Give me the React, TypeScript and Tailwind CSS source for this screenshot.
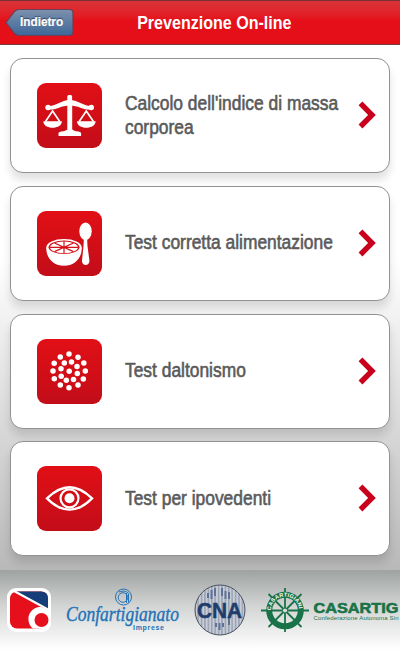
import type { ReactNode } from "react";

interface TestItem {
  label: string;
  icon: ReactNode;
}

const ScalesIcon = () => (
  <svg viewBox="0 0 65 65" className="size-full" fill="#fff">
    <rect x="30.3" y="12" width="4.8" height="8" rx="1.5" />
    <path d="M12 23c8 0 12-6 20.700-6S46 23 53.500 23v3.800c-8 0-12-4.300-20.800-4.300S20 26.800 12 26.800z" />
    <circle cx="11" cy="24.500" r="2.700" />
    <circle cx="54.300" cy="24.500" r="2.700" />
    <path d="M30.300 21h4.900v25.500h-4.900z" />
    <path d="M21.500 53v-2.500c0-1.500 1.500-1.700 5-2.200 3-.5 3-2.300 6.300-2.300s3.300 1.800 6.300 2.300c3.500.5 5 .7 5 2.200V53z" />
    <path d="M6.300 38.300h18.600c0 8.700-18.600 8.700-18.600 0zM40 38.300h18.600c0 8.700-18.600 8.700-18.600 0z" />
    <path
      d="M8.500 38.500 15.600 28l7.100 10.500M42.200 38.500 49.300 28l7.100 10.500"
      fill="none"
      stroke="#fff"
      strokeWidth="1.700"
    />
  </svg>
);

const FoodIcon = () => (
  <svg viewBox="0 0 65 65" className="size-full" fill="#fff">
    <path d="M9.300 37c0 10.500 7 17.700 17.700 17.700S44.700 47.500 44.700 37z" />
    <ellipse cx="27" cy="36.300" rx="17.700" ry="8.300" />
    <ellipse cx="27" cy="36.300" rx="15.500" ry="6.800" fill="#d41018" />
    <ellipse cx="27" cy="36.300" rx="14" ry="5.900" />
    <path
      d="M13 36.300h28M27 30v12.500M17.500 32l19 8.600M36.500 32l-19 8.600"
      stroke="#d41018"
      strokeWidth="1.200"
    />
    <ellipse cx="48.500" cy="20.300" rx="6.200" ry="8.800" />
    <path d="M46.900 27h3.200l.4 8 1.900 14.500c.4 6-7.800 6-7.400 0l1.500-14.500z" />
  </svg>
);

const dots = [
  [32, 15], [23.3, 17.900], [41, 18.200], [17.200, 24.200], [46.800, 24],
  [27.300, 24], [34.500, 22.900], [40, 27.500], [24, 29.800], [16, 32],
  [32.200, 32.300], [48.300, 32], [40.300, 34.500], [24.200, 37.200], [17.300, 39.800],
  [29.300, 41.200], [36.500, 40.500], [46.300, 39.900], [23.300, 46], [41, 45.900],
  [32, 48.800],
];

const DotsIcon = () => (
  <svg viewBox="0 0 65 65" className="size-full" fill="#fff">
    {dots.map(([x, y]) => (
      <circle key={`${x}-${y}`} cx={x} cy={y} r="2.750" />
    ))}
  </svg>
);

const EyeIcon = () => (
  <svg viewBox="0 0 65 65" className="size-full" fill="none" stroke="#fff">
    <path
      d="M10 32.300C17 25.500 24 21.200 32.500 21.200s15.500 4.300 22.500 11.100C48 39.500 41 43.600 32.500 43.600S17 39.500 10 32.300z"
      strokeWidth="2.400"
    />
    <circle cx="32.500" cy="32.300" r="9" strokeWidth="2.200" />
    <circle cx="32.500" cy="32.300" r="5" fill="#fff" stroke="none" />
  </svg>
);

const items: TestItem[] = [
  { label: "Calcolo dell'indice di massa corporea", icon: <ScalesIcon /> },
  { label: "Test corretta alimentazione", icon: <FoodIcon /> },
  { label: "Test daltonismo", icon: <DotsIcon /> },
  { label: "Test per ipovedenti", icon: <EyeIcon /> },
];

function Header() {
  return (
    <header className="relative flex h-[45px] shrink-0 items-center justify-center border-t border-b border-t-[#7d3034] border-b-[#7a3a3e] bg-linear-to-b from-[#d83339] via-[#e50f1a] via-45% to-[#e50f18]">
      <button className="absolute top-[7px] left-[5px] h-[29px] w-[69px]">
        <svg viewBox="0 0 69 29" className="absolute inset-0 size-full">
          <defs>
            <linearGradient id="back" x1="0" y1="0" x2="0" y2="1">
              <stop offset="0" stopColor="#7d91ad" />
              <stop offset="1" stopColor="#3d6798" />
            </linearGradient>
          </defs>
          <path
            d="M1 14.500 9.500 3.500Q11.500 1.500 14 1.500H64.500Q68 1.500 68 5V24Q68 27.500 64.500 27.500H14Q11.500 27.500 9.500 25.500Z"
            fill="url(#back)"
            stroke="#6b3f56"
            strokeWidth="1.200"
          />
        </svg>
        <span className="absolute top-[6px] left-[15px] origin-left scale-x-[0.980] font-['Liberation_Sans'] text-[12px] leading-[17px] font-bold text-white [-webkit-text-stroke:0.2px_#fff] [text-shadow:0_-1px_1px_#223d61]">
          Indietro
        </span>
      </button>
      <h1 className="ml-[28px] scale-x-[0.845] whitespace-nowrap font-['Liberation_Sans'] text-[19px] leading-6 font-bold text-white">
        Prevenzione On-line
      </h1>
    </header>
  );
}

function Card({ label, icon }: TestItem) {
  return (
    <li className="flex h-[115px] items-center rounded-[13px] border border-[#929292] bg-white pr-[13px] pl-[26px] shadow-[0_7px_8px_rgba(0,0,0,0.12)]">
      <div className="size-[65px] shrink-0 overflow-hidden rounded-[9px] bg-linear-to-b from-[#e20f15] to-[#c20d19]">
        {icon}
      </div>
      <div className="ml-[23px] w-[230px] shrink-0 pb-[2px]">
        <p className="w-[250px] origin-left scale-x-[0.892] font-['Liberation_Sans'] text-[19.500px] leading-6 text-[#5a5a5a] [-webkit-text-stroke:0.6px_#5a5a5a]">
          {label}
        </p>
      </div>
      <svg viewBox="0 0 18 28" className="mb-px ml-auto h-[28px] w-[18px]">
        <path
          d="M2.500 2.300 14 14 2.500 25.500"
          fill="none"
          stroke="#c8001c"
          strokeWidth="5.400"
        />
      </svg>
    </li>
  );
}

const FirstLogo = () => (
  <svg viewBox="0 0 44 44" className="size-11 shrink-0">
    <rect width="44" height="44" rx="9" fill="#fff" />
    <rect x="3" y="3.500" width="38" height="37" rx="7" fill="#e60f1c" />
    <path d="M8 3.500H34Q41 3.500 41 10.500V21.500Z" fill="#153e79" />
    <path d="M7 3 41 21.500" stroke="#fff" strokeWidth="2" />
    <path d="M41 21.500A11.500 11.500 0 0 0 26 40.500H28L41 41Z" fill="#fff" />
    <circle cx="34.500" cy="32" r="7" fill="#e60f1c" />
  </svg>
);

const ConfartigianatoLogo = () => (
  <svg
    viewBox="0 0 116 44"
    className="ml-[14px] h-11 w-[116px] shrink-0"
    fill="#2472b7"
  >
    <circle cx="58.500" cy="9" r="8" fill="none" stroke="#2472b7" />
    <circle cx="58" cy="9.500" r="4.800" fill="none" stroke="#2472b7" />
    <path d="M61.500 5v10M54 4q6-2.500 9.500 1.500v9" fill="none" stroke="#2472b7" />
    <text
      x="1"
      y="33"
      textLength="113"
      lengthAdjust="spacingAndGlyphs"
      stroke="#2472b7"
      strokeWidth="0.400"
      className="font-['Liberation_Serif'] text-[21px] italic"
    >
      Confartigianato
    </text>
    <text
      x="68"
      y="42"
      textLength="31"
      className="font-['Liberation_Sans'] text-[7px] font-bold"
    >
      Imprese
    </text>
  </svg>
);

const CnaLogo = () => (
  <svg viewBox="0 0 52 52" className="ml-[13px] size-[52px] shrink-0">
    <defs>
      <pattern id="lines" width="3.400" height="52" patternUnits="userSpaceOnUse">
        <rect width="3.400" height="52" fill="#c8ccd4" />
        <rect width="1.500" height="52" fill="#98a2b5" />
      </pattern>
    </defs>
    <circle cx="26" cy="26" r="25" fill="url(#lines)" stroke="#4b5261" />
    <path
      d="M14 9v5M17.500 6v9M21 4v8M28 4v8M31.500 7v8M35 8v7M22 39v4M25.500 39v7M29 39v4M35 33v8"
      stroke="#5e7297"
      strokeWidth="2"
    />
    <text
      x="3"
      y="34"
      textLength="45"
      lengthAdjust="spacingAndGlyphs"
      fill="#203c6b"
      stroke="#203c6b"
      strokeWidth="0.500"
      className="font-['Liberation_Sans'] text-[22px] font-bold"
    >
      CNA
    </text>
  </svg>
);

const CasartigianiLogo = () => (
  <svg viewBox="0 0 48 46" className="ml-[15px] h-[46px] w-12 shrink-0">
    <g stroke="#197348" strokeWidth="1.800" fill="none">
      <path d="M0 23.500h48M24 1v44M7.500 7l33 33M40.500 7l-33 33" />
      <circle cx="24" cy="23.500" r="15.800" strokeWidth="6" />
    </g>
    <circle cx="24" cy="23.500" r="2.500" fill="#d7dcd9" stroke="#197348" />
    <path id="rim" d="M10 23.500A14 14 0 0 1 38 23.500" fill="none" />
    <text fill="#fff" className="font-['Liberation_Sans'] text-[5.500px] font-bold">
      <textPath href="#rim" textLength="42">
        CASARTIGIANI
      </textPath>
    </text>
  </svg>
);

const CasartigianiName = () => (
  <svg
    viewBox="0 0 86 24"
    className="ml-[4px] h-6 w-[86px] shrink-0 font-['Liberation_Sans']"
    fill="#197348"
  >
    <text
      x="0.500"
      y="15"
      textLength="85"
      lengthAdjust="spacingAndGlyphs"
      stroke="#197348"
      strokeWidth="0.600"
      className="text-[15px] font-bold"
    >
      CASARTIG
    </text>
    <text x="0.500" y="22" textLength="85" className="text-[6px]">
      Confederazione Autonoma Sin
    </text>
  </svg>
);

function Footer() {
  return (
    <footer className="flex h-20 w-full shrink-0 items-center overflow-hidden bg-linear-to-b from-[#9ea3a1] via-[#d3d5d4] via-45% to-white pl-[7px]">
      <FirstLogo />
      <ConfartigianatoLogo />
      <CnaLogo />
      <CasartigianiLogo />
      <CasartigianiName />
    </footer>
  );
}

export default function App() {
  return (
    <div className="flex h-[650px] w-[400px] flex-col overflow-hidden bg-linear-to-b from-white from-40% to-[#b8b8b8] to-88%">
      <Header />
      <ul className="flex flex-1 flex-col gap-[12.750px] px-[10px] pt-[13px]">
        {items.map((item) => (
          <Card key={item.label} {...item} />
        ))}
      </ul>
      <Footer />
    </div>
  );
}
